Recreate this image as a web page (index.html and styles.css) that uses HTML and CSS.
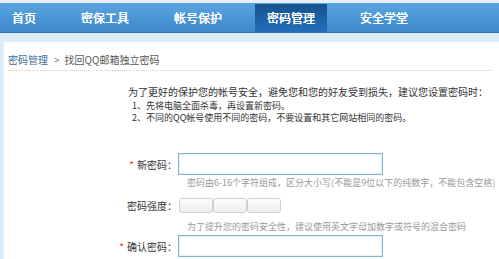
FILE: index.html
```html
<!DOCTYPE html>
<html lang="zh-CN">
<head>
<meta charset="utf-8">
<title>找回QQ邮箱独立密码</title>
<link rel="stylesheet" href="styles.css">
</head>
<body>
<div class="top-strip"></div>
<nav class="nav">
  <a class="nav-item">首页</a>
  <a class="nav-item">密保工具</a>
  <a class="nav-item">帐号保护</a>
  <a class="nav-item active">密码管理</a>
  <a class="nav-item">安全学堂</a>
</nav>
<main class="panel">
  <div class="crumb">
    <a class="crumb-link">密码管理</a><span class="crumb-sep">&gt;</span><span class="crumb-cur">找回QQ邮箱独立密码</span>
  </div>
  <p class="intro">为了更好的保护您的帐号安全，避免您和您的好友受到损失，建议您设置密码时：</p>
  <ol class="tips">
    <li>1、先将电脑全面杀毒，再设置新密码。</li>
    <li>2、不同的QQ帐号使用不同的密码，不要设置和其它网站相同的密码。</li>
  </ol>
  <div class="row row-first">
    <label class="label"><span class="req">*</span>新密码：</label>
    <input class="field" type="password">
  </div>
  <div class="hint hint-first">密码由6-16个字符组成，区分大小写(不能是9位以下的纯数字，不能包含空格)</div>
  <div class="row row-strength">
    <label class="label">密码强度：</label>
    <div class="meter"><span class="seg"></span><span class="seg"></span><span class="seg"></span></div>
  </div>
  <div class="hint hint-second">为了提升您的密码安全性，建议使用英文字母加数字或符号的混合密码</div>
  <div class="row row-confirm">
    <label class="label"><span class="req">*</span>确认密码：</label>
    <input class="field" type="password">
  </div>
</main>
</body>
</html>
```
FILE: styles.css
```css
* { box-sizing: border-box; }
html, body { margin: 0; padding: 0; }
body {
  background: #dcebf8;
  font-family: "Noto Sans CJK SC", "Noto Sans", sans-serif;
  color: #333;
  overflow: hidden;
}
.top-strip { height: 3px; background: #e6f0fa; }
.nav {
  display: flex;
  height: 30px;
  background: linear-gradient(#5aa5e0, #3c88ca);
  border-bottom: 1px solid #2f6fae;
}
.nav-item {
  display: block;
  padding: 0 12px;
  margin-right: 21px;
  line-height: 29px;
  height: 29px;
  font-size: 12px;
  font-weight: 500;
  color: #fff;
  white-space: nowrap;
  text-shadow: 0 0 0.4px #fff;
}
.nav-item.active {
  margin-top: 1px;
  height: 28px;
  line-height: 27px;
  background: linear-gradient(#17528f, #2270bb);
}
.panel {
  margin: 9px 0 0 3px;
  background: #fff;
  height: 220px;
  border-left: 1px solid #e8eef4;
}
.crumb {
  margin: 0 8px 0 4px;
  padding: 10px 0 2px 0;
  line-height: 16px;
  font-size: 10px;
  border-bottom: 1px dotted #cfcfcf;
  white-space: nowrap;
}
.crumb-link { color: #3a6c9c; }
.crumb-sep { color: #777; margin: 0 5px 0 6px; }
.crumb-cur { color: #555; }
.intro {
  margin: 14px 0 0 124px;
  font-size: 10px;
  line-height: 14px;
  color: #333;
  white-space: nowrap;
}
.tips {
  list-style: none;
  margin: 1px 0 0 128px;
  padding: 0;
  font-size: 9px;
  line-height: 12px;
  color: #333;
  white-space: nowrap;
}
.row {
  display: flex;
  align-items: center;
}
.label {
  width: 173px;
  text-align: right;
  font-size: 10px;
  color: #333;
  white-space: nowrap;
}
.req { color: #e03030; margin-right: 3px; }
.field {
  margin: 0 0 0 1px;
  width: 205px;
  height: 22px;
  border: 1px solid #7fb7cf;
  box-shadow: inset 0 0 0 1px #e3f1f7;
  background: #fff;
  padding: 0;
}
.row-first { margin-top: 29px; }
.hint {
  margin-left: 183px;
  font-size: 9px;
  line-height: 12px;
  color: #999;
  white-space: nowrap;
}
.hint-first { margin-top: 2px; }
.row-strength { margin-top: 9px; }
.meter { display: flex; margin-left: 2px; }
.seg {
  width: 34px;
  height: 15px;
  border: 1px solid #cfcfcf;
  border-radius: 3px;
  background: linear-gradient(#ffffff, #ececec);
}
.hint-second { margin-top: 8px; }
.row-confirm { margin-top: 2px; }
```
